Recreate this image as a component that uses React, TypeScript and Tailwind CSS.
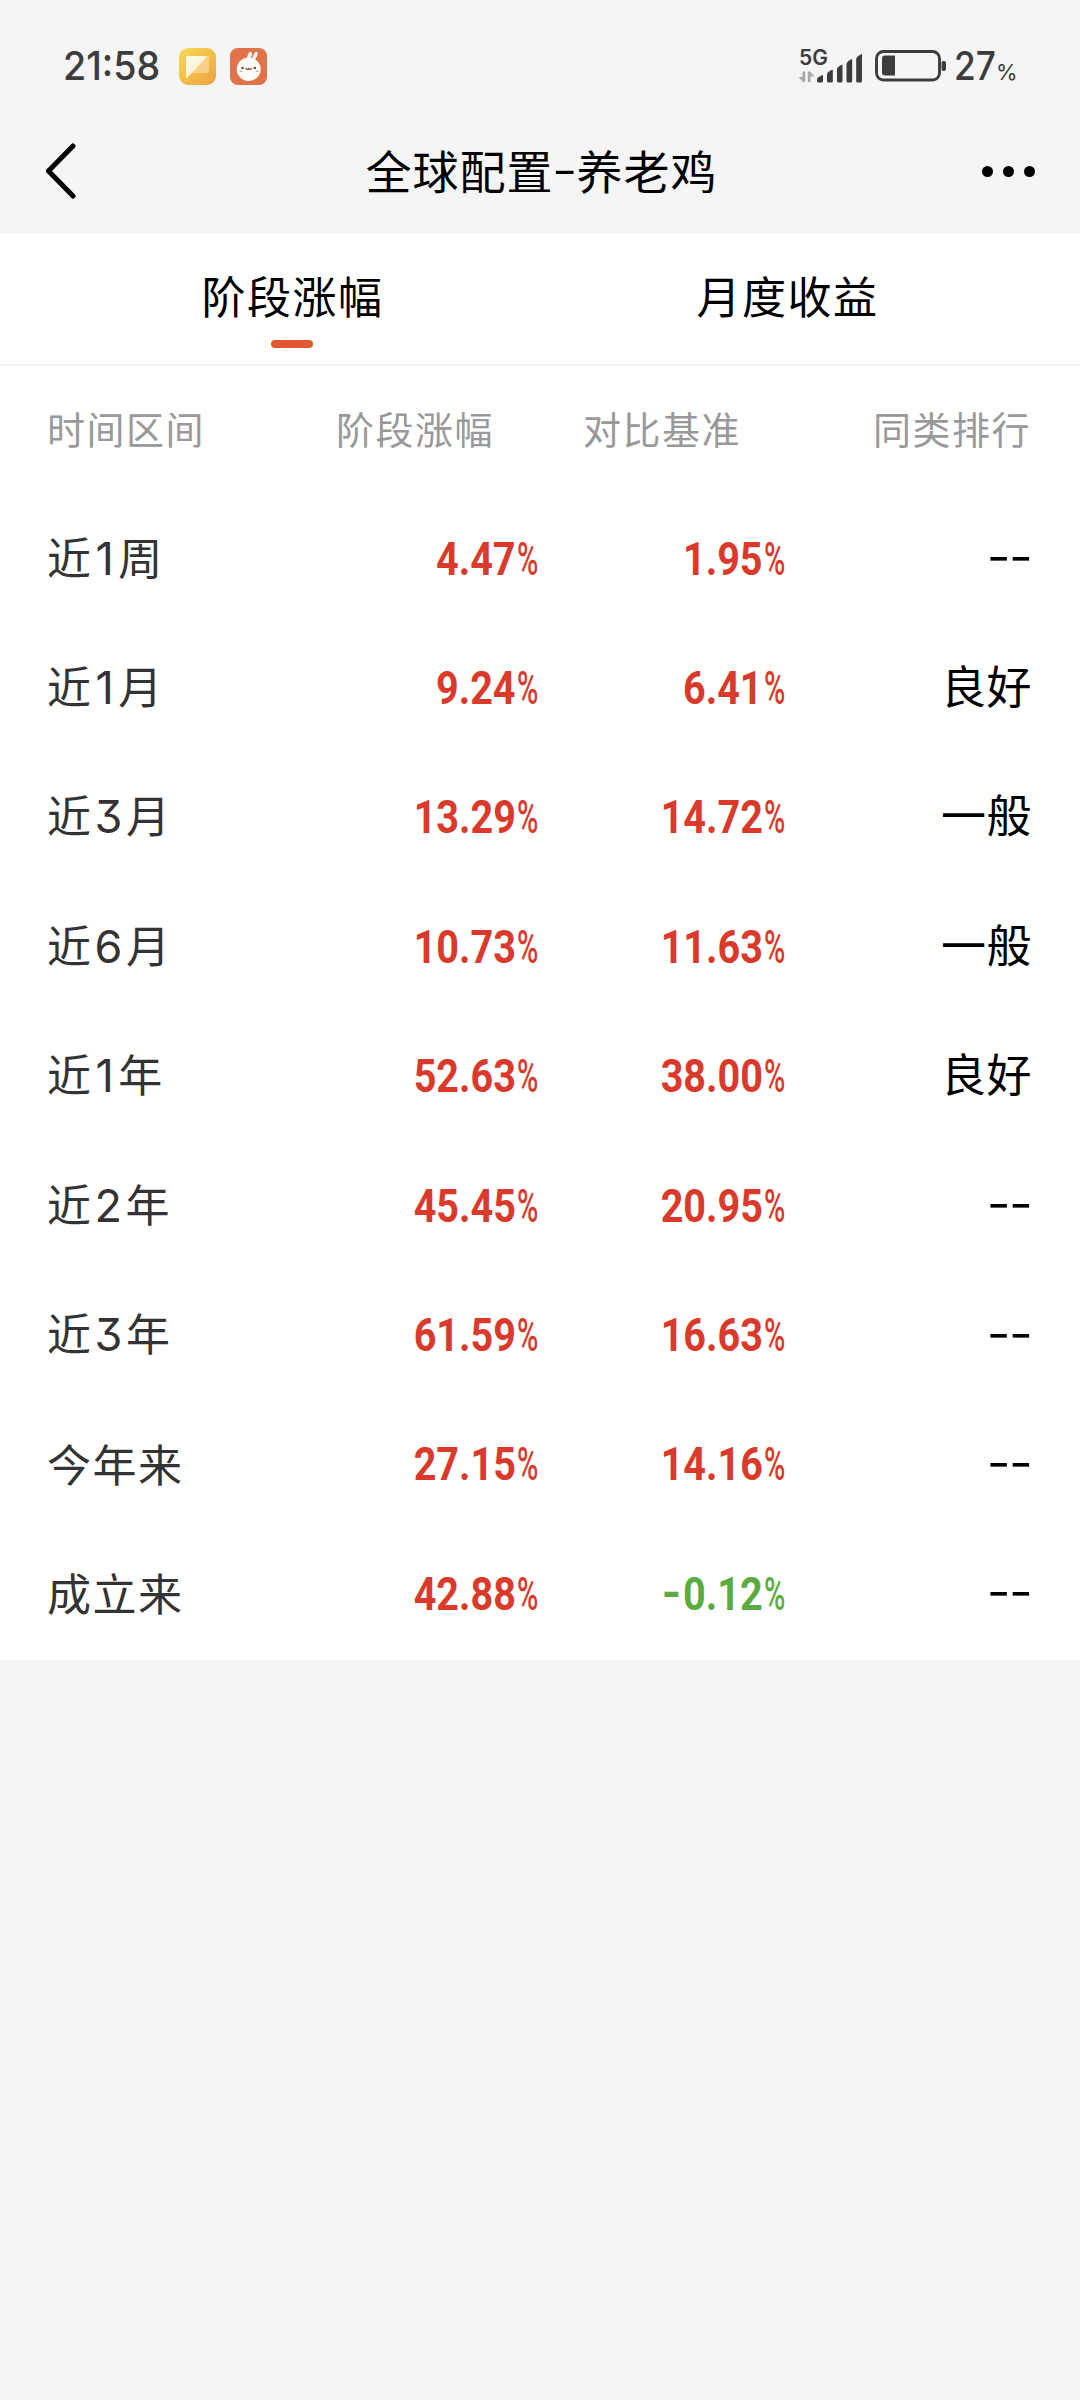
import { clsx } from "clsx";

type Period = {
  label: string;
  change: string;
  benchmark: string;
  rank: string;
};

const periods: Period[] = [
  { label: "近1周", change: "4.47", benchmark: "1.95", rank: "--" },
  { label: "近1月", change: "9.24", benchmark: "6.41", rank: "良好" },
  { label: "近3月", change: "13.29", benchmark: "14.72", rank: "一般" },
  { label: "近6月", change: "10.73", benchmark: "11.63", rank: "一般" },
  { label: "近1年", change: "52.63", benchmark: "38.00", rank: "良好" },
  { label: "近2年", change: "45.45", benchmark: "20.95", rank: "--" },
  { label: "近3年", change: "61.59", benchmark: "16.63", rank: "--" },
  { label: "今年来", change: "27.15", benchmark: "14.16", rank: "--" },
  { label: "成立来", change: "42.88", benchmark: "-0.12", rank: "--" },
];

function NoteIcon() {
  return (
    <svg width="37" height="37" viewBox="0 0 37 37">
      <defs>
        <linearGradient id="note-bg" x1="0" y1="0" x2="1" y2="1">
          <stop offset="0" stopColor="#f5dc55" />
          <stop offset="1" stopColor="#f0a040" />
        </linearGradient>
        <linearGradient id="note-fold" x1="0" y1="0" x2="1" y2="1">
          <stop offset="0" stopColor="#fff" stopOpacity="0.3" />
          <stop offset="1" stopColor="#fff" stopOpacity="0.35" />
        </linearGradient>
        <linearGradient id="note-page" x1="0" y1="0" x2="1" y2="1">
          <stop offset="0" stopColor="#fffdf0" />
          <stop offset="1" stopColor="#fdebb8" />
        </linearGradient>
      </defs>
      <rect width="37" height="37" rx="9" fill="url(#note-bg)" />
      <path d="M8 8h21a1 1 0 0 1 1 1v14a2 2 0 0 1-2 2H13z" fill="url(#note-fold)" />
      <path d="M8 8h20.500L8.500 29.500Q7.500 30.500 7 29V9.500Q7 8 8 8z" fill="url(#note-page)" />
    </svg>
  );
}

function RabbitIcon() {
  return (
    <svg width="37" height="37" viewBox="0 0 37 37">
      <rect width="37" height="37" rx="8" fill="#e0734a" />
      <g fill="#fffdf8">
        <ellipse cx="19.500" cy="7.800" rx="1.900" ry="4.400" transform="rotate(20 19.500 7.800)" />
        <ellipse cx="25" cy="8" rx="1.900" ry="4.400" transform="rotate(24 25 8)" />
        <ellipse cx="18.700" cy="21.300" rx="12" ry="11.700" />
      </g>
      <circle cx="12.500" cy="20" r="1.200" fill="#5c4234" />
      <circle cx="24.800" cy="20" r="1.200" fill="#5c4234" />
      <path d="M16 20.500q1.300 2 2.700 0q1.300 2 2.700 0" fill="none" stroke="#5c4234" strokeWidth="1.200" strokeLinecap="round" />
      <path d="M9.500 23.300h3M25.500 23.300h3" stroke="#f0a58e" strokeWidth="1.200" />
    </svg>
  );
}

function SignalIcon() {
  return (
    <svg width="66" height="34" viewBox="0 0 66 34">
      <g fill="#a9a9a9">
        <path d="M7.200 22.500v10.500H5L.5 28h4v-5.500z" />
        <path d="M9.800 33V22.500H12l4.500 5h-4V33z" />
      </g>
      <g fill="#3c3c3c">
        <path d="M19 30.500Q19 28 25 26v6q0 1.500-1.500 1.500h-3Q19 33.500 19 32z" />
        <path d="M29 25Q29.500 22.500 34.800 20.500V32q0 1.500-1.500 1.500h-2.800Q29 33.500 29 32z" />
        <path d="M39 20Q39.500 17.500 44.500 15.500V32q0 1.500-1.500 1.500h-2.500Q39 33.500 39 32z" />
        <path d="M48.500 15Q49 12 54.200 10v22q0 1.500-1.500 1.500H50q-1.500 0-1.500-1.500z" />
        <path d="M58.200 10Q58.700 7 64 5v27q0 1.500-1.500 1.500h-2.800q-1.500 0-1.500-1.500z" />
      </g>
    </svg>
  );
}

function BatteryIcon() {
  return (
    <svg width="72" height="32" viewBox="0 0 72 32">
      <rect x="1.500" y="1.500" width="63" height="28.500" rx="7" fill="none" stroke="#3c3c3c" strokeWidth="2.900" />
      <path d="M20 5.500v20H10q-3 0-3-3v-14q0-3 3-3z" fill="#3c3c3c" />
      <rect x="66.500" y="11" width="4.500" height="10" rx="2" fill="#3c3c3c" />
    </svg>
  );
}

function StatusBar() {
  return (
    <div className="flex h-[108px] items-center justify-between pt-6 pr-[64px] pl-[63px] font-['Inter',sans-serif] leading-none text-[#3c3c3c]">
      <div className="flex items-center">
        <span className="w-[116px]">
          <span className="inline-block origin-left scale-x-[0.94] text-[40px] font-medium">21:58</span>
        </span>
        <div className="flex gap-[14px]">
          <NoteIcon />
          <RabbitIcon />
        </div>
      </div>
      <div className="flex items-center">
        <div className="relative mr-[11px] flex">
          <SignalIcon />
          <span className="absolute top-0 left-px text-[21px] leading-[17px] font-semibold">5G</span>
        </div>
        <BatteryIcon />
        <div className="ml-[7px] flex w-[62px] items-baseline">
          <span className="w-[42px]">
            <span className="inline-block origin-left scale-x-[0.88] text-[40px] font-medium">27</span>
          </span>
          <span className="w-[20px]">
            <span className="inline-block origin-left text-[22px]">%</span>
          </span>
        </div>
      </div>
    </div>
  );
}

function NavBar() {
  return (
    <header className="flex h-[126px] items-center justify-between px-[45px]">
      <svg width="32" height="56" viewBox="0 0 32 56" fill="none" stroke="#000" strokeWidth="5" strokeLinecap="round" strokeLinejoin="round">
        <path d="M28 3L3.500 28L28 53" />
      </svg>
      <h1 className="ml-[24px] text-[46px] whitespace-nowrap tracking-[1px]">
        全球配置<span className="mx-[3px] mb-1 inline-block scale-x-150 -translate-y-[4px]">-</span>养老鸡
      </h1>
      <div className="flex gap-[10px]">
        <span className="size-[11px] rounded-full bg-black" />
        <span className="size-[11px] rounded-full bg-black" />
        <span className="size-[11px] rounded-full bg-black" />
      </div>
    </header>
  );
}

function PeriodLabel({ label }: { label: string }) {
  return (
    <span className="mb-[5px] text-[44px] tracking-[1.500px] text-[#333]">
      {label.split(/(\d)/).map((part, i) =>
        /\d/.test(part) ? (
          <span
            key={i}
            className={clsx(
              "font-['Inter',sans-serif] text-[45px] [font-feature-settings:'cv09']",
              part === "1" ? "mx-[3px]" : "mx-[2px]",
            )}
          >
            {part}
          </span>
        ) : (
          part
        ),
      )}
    </span>
  );
}

function Percent({ value }: { value: string }) {
  const negative = value.startsWith("-");
  return (
    <div
      className={clsx(
        "flex justify-end pb-[2px] font-['Roboto',sans-serif] text-[46px]",
        negative ? "text-[#5aac41]" : "text-[#d93a2b]",
      )}
    >
      <span className="origin-right scale-x-[0.86] font-bold">
        {negative && <span className="mr-[2px] inline-block origin-right scale-x-125 -translate-y-[1px]">-</span>}
        {value.replace("-", "")}
      </span>
      <span className="w-[23px] pl-[1px]">
        <span className="inline-block origin-left scale-x-[0.63] font-medium">%</span>
      </span>
    </div>
  );
}

function Rank({ value }: { value: string }) {
  if (value === "--") {
    return <span className="mb-[14px] origin-right scale-x-[1.45] text-right font-medium">--</span>;
  }
  return <span className="mb-[9px] text-right text-[45px] tracking-[0.500px]">{value}</span>;
}

export default function App() {
  return (
    <div className="min-h-[2400px] w-[1080px] overflow-hidden bg-[#f5f5f5] font-['Noto_Sans_CJK_SC',sans-serif] leading-none text-black">
      <StatusBar />
      <NavBar />
      <main className="bg-white">
        <div className="flex h-[132px] border-b-2 border-[#f3f3f3] px-[45px] text-[44px] tracking-[1.500px]">
          <div className="flex flex-1 flex-col items-center pt-[39px]">
            <span>阶段涨幅</span>
            <span className="mt-[23px] mr-[2px] h-[8px] w-[42px] rounded-full bg-[#e5552f]" />
          </div>
          <div className="flex flex-1 flex-col items-center pt-[39px]">月度收益</div>
        </div>
        <div className="grid h-[129px] grid-cols-[289px_157px_248px_290px] items-center pb-[5px] pl-[47px] text-[38px] tracking-[1.500px] whitespace-nowrap text-[#999]">
          <span>时间区间</span>
          <span>阶段涨幅</span>
          <span className="text-right">对比基准</span>
          <span className="text-right">同类排行</span>
        </div>
        {periods.map((p) => (
          <div
            key={p.label}
            className="grid h-[129.400px] grid-cols-[290px_202px_247px_246px] items-center pl-[47px] text-[43px]"
          >
            <PeriodLabel label={p.label} />
            <Percent value={p.change} />
            <Percent value={p.benchmark} />
            <Rank value={p.rank} />
          </div>
        ))}
      </main>
    </div>
  );
}
